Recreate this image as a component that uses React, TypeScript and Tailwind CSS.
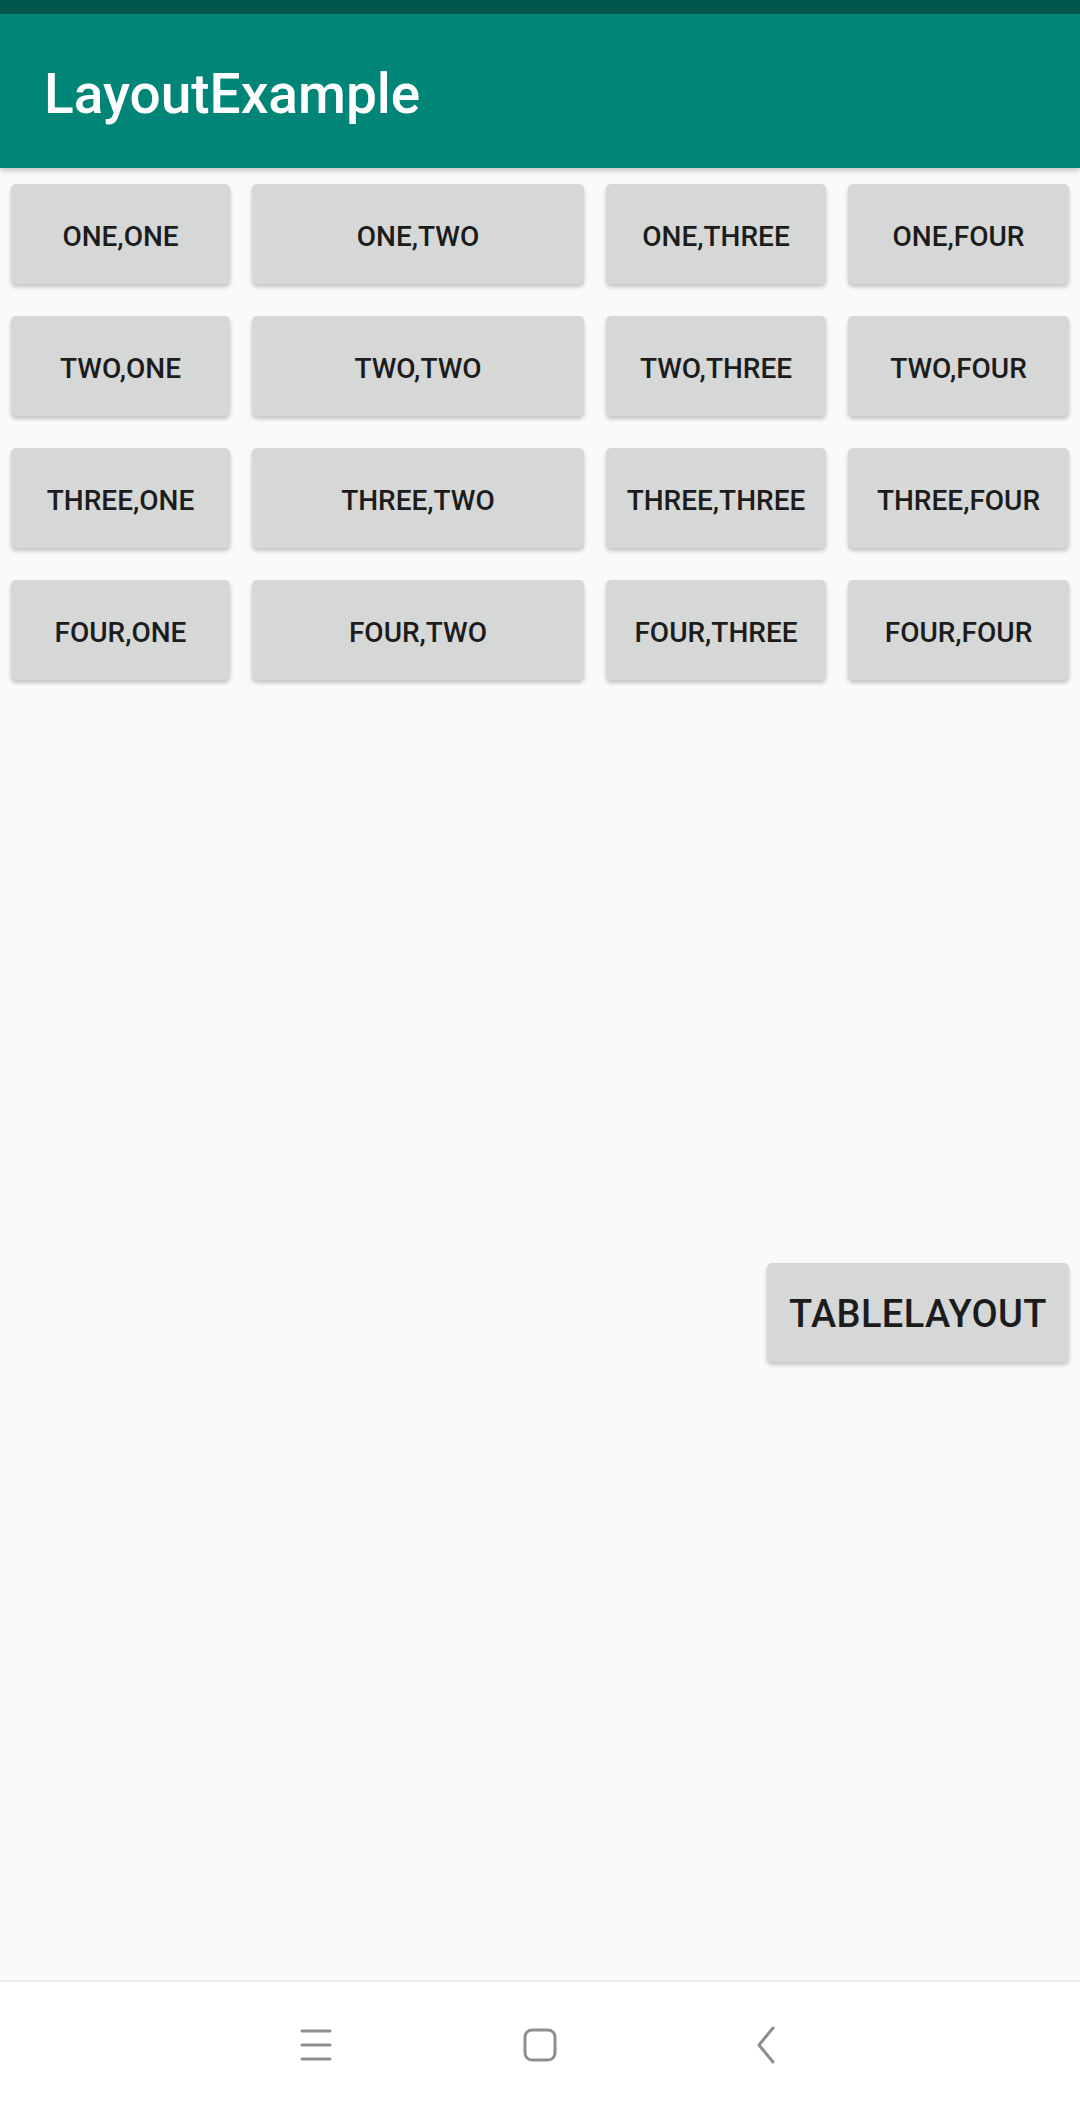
import React from 'react';

const rows = ['ONE', 'TWO', 'THREE', 'FOUR'];
const cols = ['ONE', 'TWO', 'THREE', 'FOUR'];

const GridButton: React.FC<{ label: string }> = ({ label }) => (
  <div className="h-full px-[11px] py-[16px]">
    <button className="w-full h-full bg-[#d6d7d7] rounded-[5px] shadow-[0_3px_4px_rgba(0,0,0,0.22)] flex items-center justify-center pt-[5px] text-[28px] font-medium text-[#1c1c1c] tracking-[0px]">
      {label}
    </button>
  </div>
);

const App: React.FC = () => {
  return (
    <div
      className="w-[1080px] h-[2108px] flex flex-col bg-[#fafafa] overflow-hidden"
      style={{ fontFamily: 'Roboto, "Noto Sans", sans-serif' }}
    >
      <div className="h-[14px] bg-[#00574b]" />
      <header className="h-[154px] bg-[#008577] flex items-center px-[44px] pt-[6px] shadow-[0_3px_5px_rgba(0,0,0,0.2)] relative z-10">
        <h1 className="text-white text-[55px] font-medium leading-none">LayoutExample</h1>
      </header>

      <div className="flex flex-col">
        {rows.map((r) => (
          <div key={r} className="grid grid-cols-[241px_354px_242px_243px] h-[132px]">
            {cols.map((c) => (
              <GridButton key={c} label={`${r},${c}`} />
            ))}
          </div>
        ))}
      </div>

      <div className="flex justify-end pr-[11px] mt-[567px]">
        <button className="w-[302px] h-[99px] bg-[#d6d7d7] rounded-[5px] shadow-[0_3px_4px_rgba(0,0,0,0.22)] flex items-center justify-center pt-[3px] text-[38px] font-medium text-[#1c1c1c] tracking-[0.4px]">
          TABLELAYOUT
        </button>
      </div>

      <nav className="mt-auto h-[128px] bg-white border-t-2 border-[#ececec] flex items-center">
        <div className="w-[316px]" />
        <div className="flex items-center">
          <svg width="32" height="32" viewBox="0 0 32 32" className="-ml-[16px]">
            <g stroke="#8e8e8e" strokeWidth="3" strokeLinecap="round">
              <line x1="2" y1="2" x2="30" y2="2" />
              <line x1="2" y1="16" x2="30" y2="16" />
              <line x1="2" y1="30" x2="30" y2="30" />
            </g>
          </svg>
          <svg width="34" height="34" viewBox="0 0 34 34" className="ml-[191px]">
            <rect x="2" y="2" width="30" height="30" rx="7" fill="none" stroke="#8e8e8e" strokeWidth="3" />
          </svg>
          <svg width="20" height="38" viewBox="0 0 20 38" className="ml-[199px]">
            <polyline points="17,2 3,19 17,36" fill="none" stroke="#8e8e8e" strokeWidth="3" strokeLinecap="round" strokeLinejoin="round" />
          </svg>
        </div>
      </nav>
    </div>
  );
};

export default App;
